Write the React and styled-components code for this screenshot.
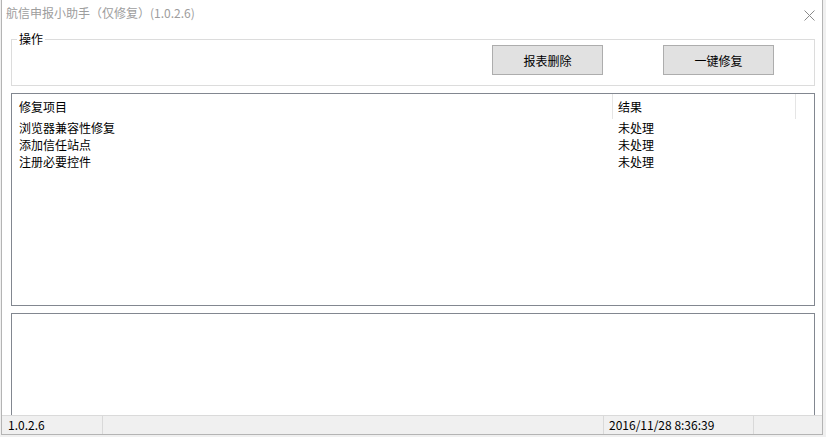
import React from "react";
import styled, { createGlobalStyle } from "styled-components";

const GlobalStyle = createGlobalStyle`
  html, body {
    margin: 0;
    padding: 0;
    background: #f0f0f0;
  }
  body {
    font-family: "Noto Sans CJK SC", "Microsoft YaHei", sans-serif;
    font-size: 12px;
    color: #000;
  }
`;

const Window = styled.div`
  box-sizing: border-box;
  width: 822px;
  height: 435px;
  margin-left: 1px;
  background: #fff;
  border: 1px solid #b4b4b4;
  border-top: none;
  display: flex;
  flex-direction: column;
`;

const TitleBar = styled.div`
  height: 30px;
  flex: none;
  display: flex;
  align-items: center;
  justify-content: space-between;
  padding-left: 4px;
`;

const Title = styled.span`
  color: #9d9d9d;
  font-size: 12px;
  line-height: 14px;
  margin-top: -4px;
  white-space: pre;
`;

const CloseButton = styled.div`
  width: 26px;
  height: 30px;
  display: flex;
  align-items: center;
  justify-content: center;
`;

const Body = styled.div`
  flex: 1 1 0;
  min-height: 0;
  overflow: hidden;
  display: flex;
  flex-direction: column;
  padding: 2px 7px 0 9px;
`;

const GroupBox = styled.fieldset`
  margin: 0;
  padding: 0 40px 10px 0;
  border: 1px solid #dcdcdc;
  min-width: 0;
`;

const Legend = styled.legend`
  margin-left: 5px;
  padding: 0 2px;
  font-size: 12px;
  line-height: 14px;
`;

const ButtonRow = styled.div`
  display: flex;
  justify-content: flex-end;
  gap: 60px;
  margin-top: -1px;
`;

const Button = styled.button`
  box-sizing: border-box;
  width: 111px;
  height: 30px;
  background: #e1e1e1;
  border: 1px solid #adadad;
  font-family: inherit;
  font-size: 12px;
  color: #000;
  padding: 0;
`;

const ListView = styled.div`
  box-sizing: border-box;
  margin-top: 7px;
  height: 213px;
  flex: none;
  border: 1px solid #828790;
  display: grid;
  grid-template-columns: 601px 183px 1fr;
  grid-auto-rows: 17px;
  grid-template-rows: 25px;
  align-content: start;
`;

const HeaderCell = styled.div`
  padding-left: ${(p) => p.$pad}px;
  line-height: 25px;
  border-right: ${(p) => (p.$last ? "none" : "1px solid #e5e5e5")};
  white-space: nowrap;
`;

const Cell = styled.div`
  padding-left: ${(p) => p.$pad}px;
  line-height: 17px;
  white-space: nowrap;
`;

const LogBox = styled.div`
  box-sizing: border-box;
  margin-top: 7px;
  height: 130px;
  flex: none;
  border: 1px solid #828790;
  background: #fff;
`;

const StatusBar = styled.div`
  box-sizing: border-box;
  height: 19px;
  flex: none;
  background: #f0f0f0;
  border-top: 1px solid #dadada;
  display: flex;
`;

const StatusPanel = styled.div`
  box-sizing: border-box;
  width: ${(p) => (p.$width ? `${p.$width}px` : "auto")};
  flex: ${(p) => (p.$width ? "none" : "1")};
  padding-left: ${(p) => p.$pad || 0}px;
  border-right: ${(p) => (p.$last ? "none" : "1px solid #d9d9d9")};
  font-size: 12px;
  line-height: 18px;
  white-space: nowrap;
`;

const rows = [
  { name: "浏览器兼容性修复", result: "未处理" },
  { name: "添加信任站点", result: "未处理" },
  { name: "注册必要控件", result: "未处理" },
];

const App = () => {
  return (
    <>
      <GlobalStyle />
      <Window>
        <TitleBar>
          <Title>航信申报小助手（仅修复）(1.0.2.6)</Title>
          <CloseButton>
            <svg width="11" height="11" viewBox="0 0 11 11">
              <path d="M0.5 0.5 L10.5 10.5 M10.5 0.5 L0.5 10.5" stroke="#8a8a8a" strokeWidth="1" fill="none" />
            </svg>
          </CloseButton>
        </TitleBar>
        <Body>
          <GroupBox>
            <Legend>操作</Legend>
            <ButtonRow>
              <Button>报表删除</Button>
              <Button>一键修复</Button>
            </ButtonRow>
          </GroupBox>
          <ListView>
            <HeaderCell $pad={7}>修复项目</HeaderCell>
            <HeaderCell $pad={5}>结果</HeaderCell>
            <HeaderCell $last />
            {rows.map((r) => (
              <React.Fragment key={r.name}>
                <Cell $pad={7}>{r.name}</Cell>
                <Cell $pad={5}>{r.result}</Cell>
                <Cell />
              </React.Fragment>
            ))}
          </ListView>
          <LogBox />
        </Body>
        <StatusBar>
          <StatusPanel $width={101} $pad={6}>1.0.2.6</StatusPanel>
          <StatusPanel $width={501} />
          <StatusPanel $width={150} $pad={5}>2016/11/28 8:36:39</StatusPanel>
          <StatusPanel $last />
        </StatusBar>
      </Window>
    </>
  );
};

export default App;
